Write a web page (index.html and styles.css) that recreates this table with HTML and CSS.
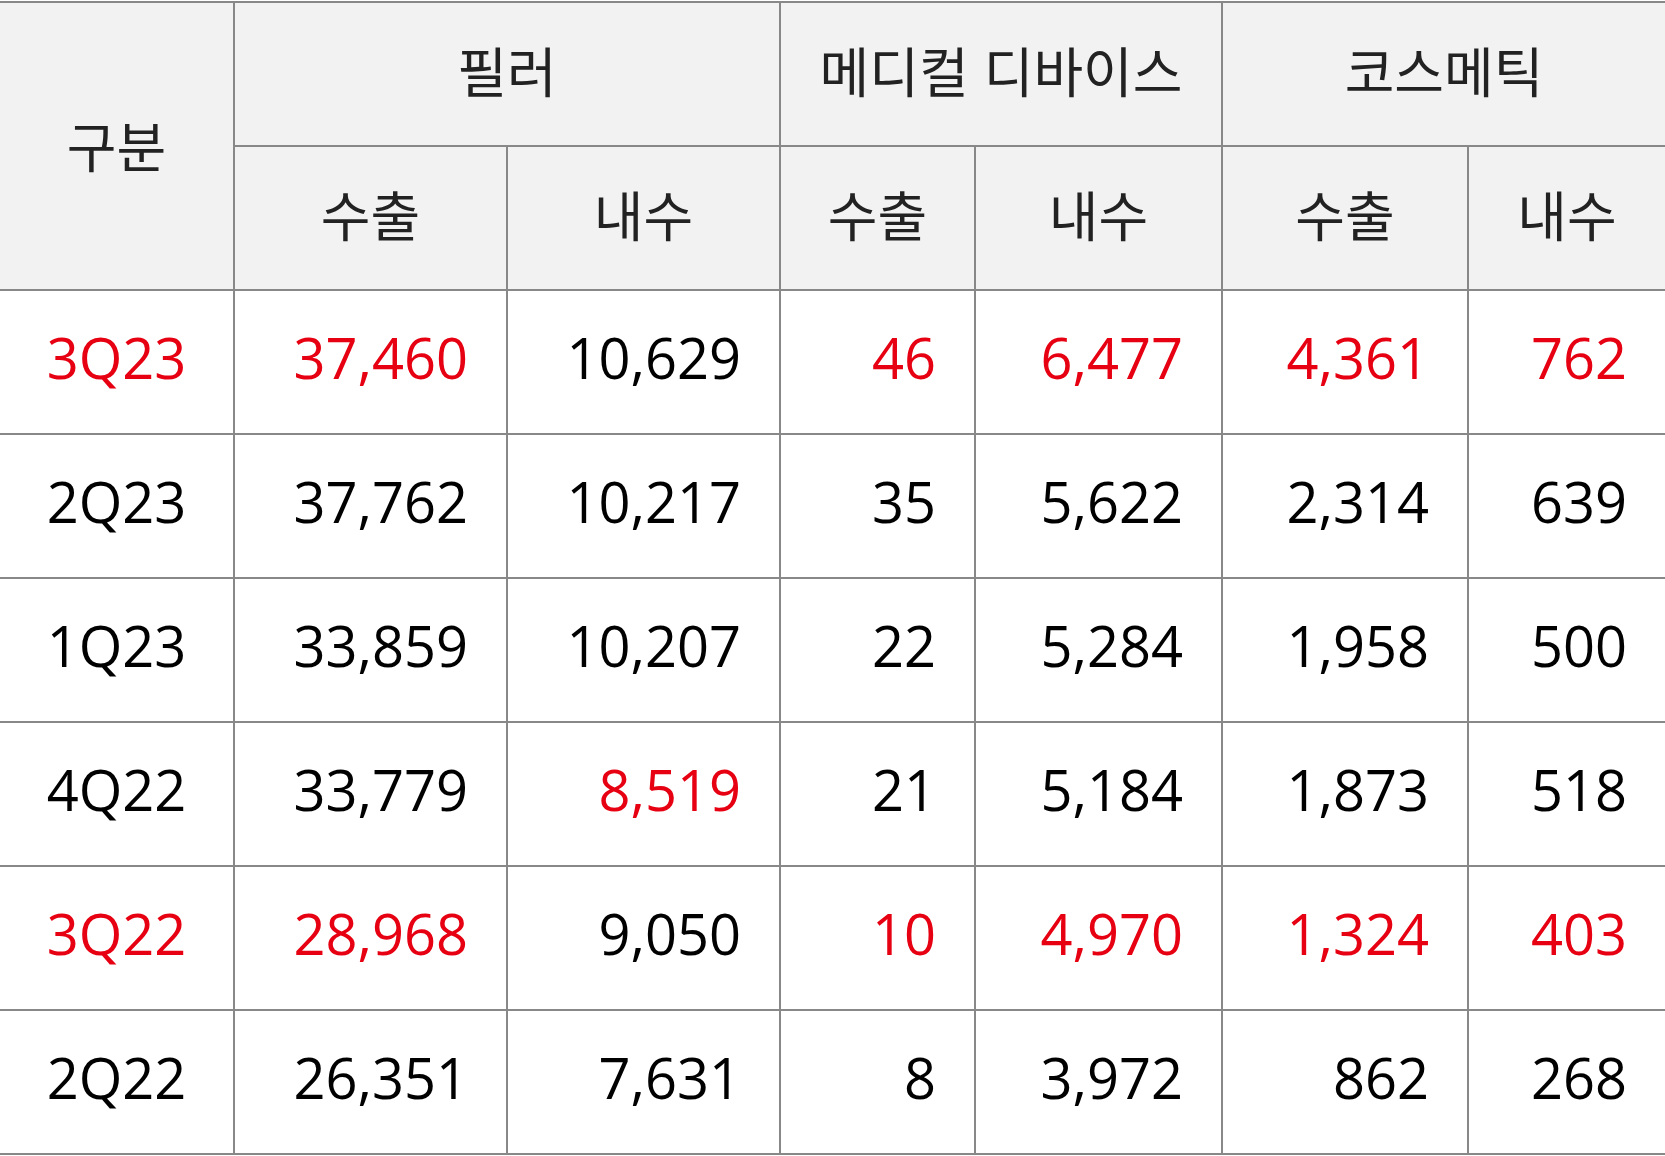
FILE: index.html
```html
<!DOCTYPE html>
<html lang="ko">
<head>
<meta charset="utf-8">
<title>분기별 매출</title>
<link rel="stylesheet" href="styles.css">
</head>
<body>
<table class="sales">
  <colgroup>
    <col class="c-label">
    <col class="c-wide">
    <col class="c-wide">
    <col class="c-narrow">
    <col class="c-mid">
    <col class="c-mid2">
    <col class="c-last">
  </colgroup>
  <thead>
    <tr class="top">
      <th rowspan="2" class="h-label">구분</th>
      <th colspan="2">필러</th>
      <th colspan="2">메디컬 디바이스</th>
      <th colspan="2">코스메틱</th>
    </tr>
    <tr>
      <th>수출</th>
      <th>내수</th>
      <th>수출</th>
      <th>내수</th>
      <th>수출</th>
      <th>내수</th>
    </tr>
  </thead>
  <tbody>
    <tr>
      <td class="q red">3Q23</td>
      <td class="red">37,460</td>
      <td>10,629</td>
      <td class="red">46</td>
      <td class="red">6,477</td>
      <td class="red">4,361</td>
      <td class="red">762</td>
    </tr>
    <tr>
      <td class="q">2Q23</td>
      <td>37,762</td>
      <td>10,217</td>
      <td>35</td>
      <td>5,622</td>
      <td>2,314</td>
      <td>639</td>
    </tr>
    <tr>
      <td class="q">1Q23</td>
      <td>33,859</td>
      <td>10,207</td>
      <td>22</td>
      <td>5,284</td>
      <td>1,958</td>
      <td>500</td>
    </tr>
    <tr>
      <td class="q">4Q22</td>
      <td>33,779</td>
      <td class="red">8,519</td>
      <td>21</td>
      <td>5,184</td>
      <td>1,873</td>
      <td>518</td>
    </tr>
    <tr>
      <td class="q red">3Q22</td>
      <td class="red">28,968</td>
      <td>9,050</td>
      <td class="red">10</td>
      <td class="red">4,970</td>
      <td class="red">1,324</td>
      <td class="red">403</td>
    </tr>
    <tr>
      <td class="q">2Q22</td>
      <td>26,351</td>
      <td>7,631</td>
      <td>8</td>
      <td>3,972</td>
      <td>862</td>
      <td>268</td>
    </tr>
  </tbody>
</table>
</body>
</html>
```
FILE: styles.css
```css
html, body {
  margin: 0;
  padding: 0;
  background: #ffffff;
}

body {
  padding-top: 1px;
}

.sales {
  width: 1665px;
  border-collapse: collapse;
  table-layout: fixed;
  font-family: "Open Sans", "Noto Sans CJK KR", sans-serif;
}

.c-label { width: 234px; }
.c-wide { width: 273px; }
.c-narrow { width: 195px; }
.c-mid { width: 247px; }
.c-mid2 { width: 246px; }
.c-last { width: 197px; }

.sales th,
.sales td {
  height: 144px;
  padding: 0;
  border: 2px solid #888888;
  box-sizing: border-box;
}

.sales tr > :first-child { border-left: none; }
.sales tr > :last-child { border-right: none; }

.sales th {
  background: #f2f2f2;
  color: #222222;
  font-family: "Noto Sans CJK KR", sans-serif;
  font-weight: 400;
  font-size: 54px;
  text-align: center;
  vertical-align: middle;
  padding-bottom: 10px;
}

.sales tr.top th.h-label {
  padding-bottom: 4px;
}

.sales td {
  color: #000000;
  font-size: 56px;
  text-align: right;
  padding-right: 38px;
  padding-bottom: 11px;
  vertical-align: middle;
}

.sales td.q {
  text-align: center;
  padding-right: 0;
}

.sales td.red {
  color: #e60012;
}
```
